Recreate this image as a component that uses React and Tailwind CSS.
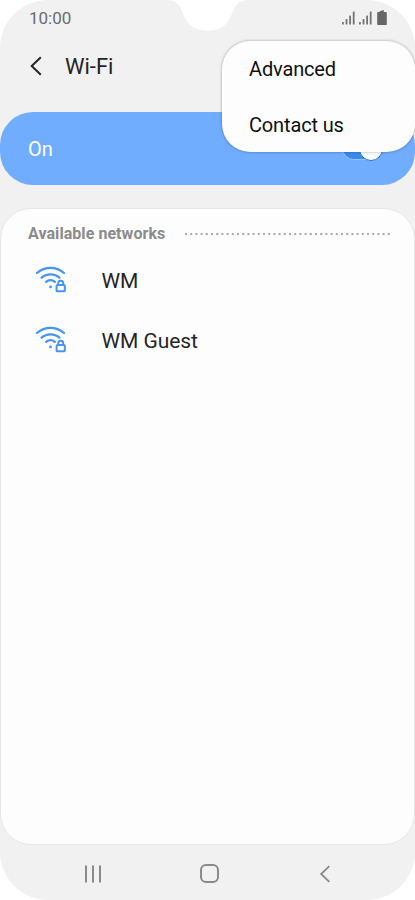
const signalBars = [
  [0, 11, 2.5],
  [3.6, 8, 5.5],
  [7.2, 4.6, 8.9],
  [10.8, 0.6, 12.9],
];

const networks = ["WM", "WM Guest"];

function Signal() {
  return (
    <svg width="13" height="14" viewBox="0 0 13 14" fill="#747474" className="-mt-px">
      {signalBars.map(([x, y, h]) => (
        <rect key={x} x={x} y={y} width="1.8" height={h} rx="0.5" />
      ))}
    </svg>
  );
}

function Battery() {
  return (
    <svg width="10" height="15" viewBox="0 0 10 15" fill="#666666" className="block">
      <path d="M2.6 2V1.2L6.8 0v2H9q.8 0 .8.8v11.4q0 .8-.8.8H1q-.8 0-.8-.8V2.8Q.2 2 1 2Z" />
    </svg>
  );
}

function WifiLock() {
  return (
    <svg width="32" height="28" viewBox="0 0 32 28" fill="none" stroke="#4795ed" strokeWidth="2.3" strokeLinecap="round" className="-mt-1">
      <path d="M2 7Q8 1.8 15.5 1.8T29 7" />
      <path d="M6.6 11.6Q10.2 8.3 15.5 8.3T24.4 11.6" />
      <path d="M11.2 15.9Q13 14.2 15.5 14.2T19.8 15.9" />
      <circle cx="15.5" cy="20.9" r="1.4" fill="#4795ed" stroke="none" />
      <rect x="21.6" y="19.1" width="8.2" height="6.2" rx="0.9" strokeWidth="2" />
      <path d="M23.2 19V17.2a2.5 2.5 0 0 1 5 0V19" strokeWidth="1.9" />
    </svg>
  );
}

function Chevron({ className }) {
  return (
    <svg width="12" height="20" viewBox="0 0 12 20" fill="none" stroke="currentColor" strokeWidth="2" className={className}>
      <path d="M10.8 1.3 1.7 10l9.1 8.7" />
    </svg>
  );
}

export default function App() {
  return (
    <div className="h-[900px] w-[415px] bg-white font-['Roboto',sans-serif]">
      <div className="relative flex h-full w-full flex-col overflow-hidden rounded-[48px] bg-[#f1f1f1]">
        <svg width="90" height="32" viewBox="0 0 90 32" className="absolute left-[163px] top-0">
          <path d="M5 0C13 1 17 5 19 11C23 24 31 30.8 44.5 30.8S66 24 70 11C72 5 76 1 84 0Z" fill="white" />
        </svg>

        <header className="flex h-9 shrink-0 items-center justify-between pl-[29px] pr-7">
          <span className="text-[17px] leading-9 text-[#6c6c6c]">10:00</span>
          <div className="flex items-center gap-1">
            <Signal />
            <Signal />
            <span className="ml-[1px] -mt-[2px]"><Battery /></span>
          </div>
        </header>

        <div className="flex h-[75.5px] shrink-0 items-start pl-[30px] pt-5">
          <Chevron className="text-[#252525]" />
          <h1 className="ml-[23px] -mt-px text-[22px] leading-6 text-[#252525]">Wi-Fi</h1>
        </div>

        <section className="flex h-[73.9px] shrink-0 items-center justify-between rounded-[33px] bg-[#70acff] pl-7 pr-8">
          <span className="mt-0.5 text-[20px] text-white">On</span>
          <div className="mt-px flex h-[23px] w-[41px] items-center justify-end rounded-full border border-[#98c5ff] bg-[#398bf0]">
            <span className="-mr-px size-6 shrink-0 rounded-full border border-[#1677dc] bg-[#fdfdfd]" />
          </div>
        </section>

        <main className="mt-[22.8px] h-[636.8px] shrink-0 rounded-[31px] border border-[#e6e6e6] bg-[#fdfdfd]">
          <div className="flex h-[49px] items-center pl-[27px]">
            <h2 className="w-[157px] text-[16px] font-bold tracking-[0.06px] text-[#8b8b8b]">Available networks</h2>
            <svg width="205" height="2" viewBox="0 0 205 2">
              <path d="M0 1H205" stroke="#a9a9a9" strokeWidth="2" strokeDasharray="2 3.2" />
            </svg>
          </div>
          <ul className="-mt-[6.5px]">
            {networks.map((name) => (
              <li key={name} className="flex h-15 items-center pl-[34px]">
                <WifiLock />
                <span className="ml-[34.5px] text-[21px] tracking-[-0.08px] text-[#252525]">{name}</span>
              </li>
            ))}
          </ul>
        </main>

        <nav className="flex grow items-center pl-[84px] pt-[3px] text-[#8a8a8a]">
          <svg width="18" height="18" viewBox="0 0 18 18" stroke="currentColor" strokeWidth="2">
            <path d="M2 .5v17M9 .5v17M16 .5v17" />
          </svg>
          <span className="ml-[97.5px] size-[19px] rounded-[6px] border-2 border-current" />
          <Chevron className="ml-[100.5px] h-[18px]" />
        </nav>

        <div className="absolute left-[222px] top-[41px] flex h-[111px] w-[193px] flex-col rounded-[28px] bg-[#fdfdfd] pl-[27px] text-[20px] tracking-[-0.15px] text-[#101010] shadow-[0_0_3px_rgba(0,0,0,0.35)]">
          <div className="flex h-14 shrink-0 items-center">Advanced</div>
          <div className="flex h-14 shrink-0 items-center">Contact us</div>
        </div>
      </div>
    </div>
  );
}
